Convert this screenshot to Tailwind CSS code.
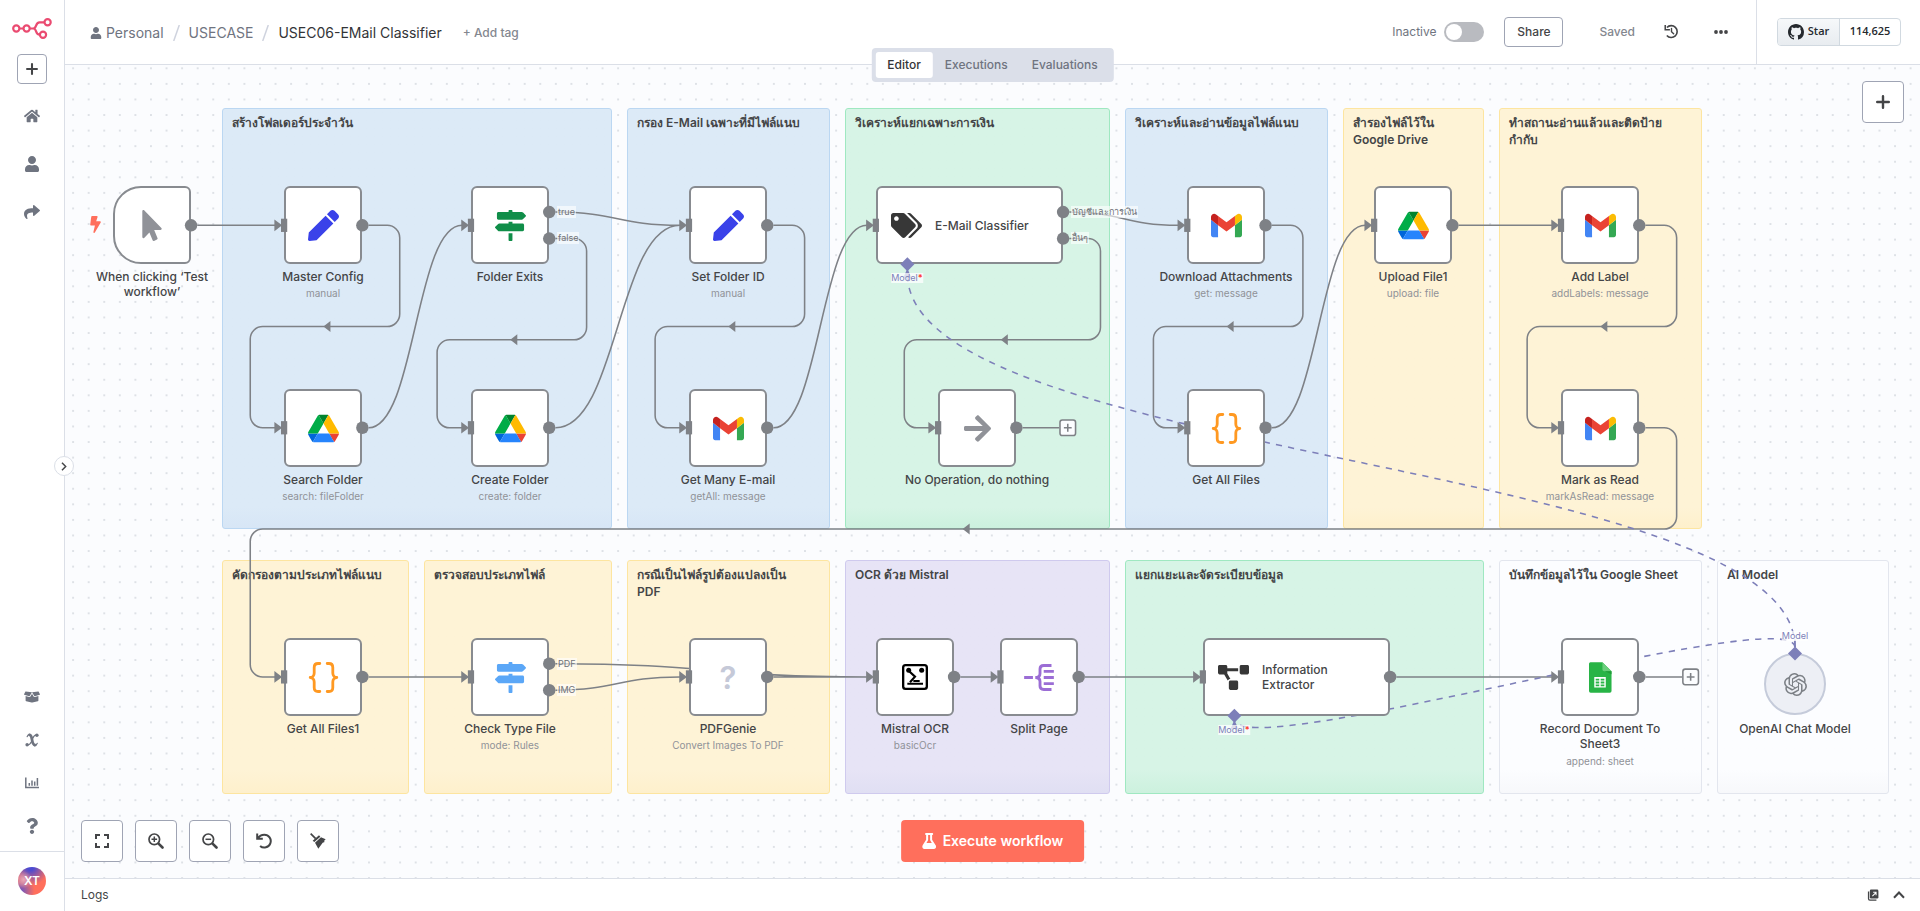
<!DOCTYPE html>
<html lang="en">
<head>
<meta charset="utf-8">
<title>USEC06-EMail Classifier</title>
<script src="https://cdn.jsdelivr.net/npm/@tailwindcss/browser@4"></script>
</head>
<body class="flex h-screen overflow-hidden bg-white font-['Inter','DejaVu_Sans',sans-serif] text-[#444547]">

<!-- Icon library -->
<svg class="hidden" aria-hidden="true">
  <symbol id="i-home" viewBox="0 0 576 512"><path fill="currentColor" d="M280.37 148.26L96 300.11V464a16 16 0 0 0 16 16l112.06-.29a16 16 0 0 0 15.92-16V368a16 16 0 0 1 16-16h64a16 16 0 0 1 16 16v95.64a16 16 0 0 0 16 16.05L464 480a16 16 0 0 0 16-16V300L295.67 148.26a12.19 12.19 0 0 0-15.3 0zM571.6 251.47L488 182.56V44.05a12 12 0 0 0-12-12h-56a12 12 0 0 0-12 12v72.61L318.47 43a48 48 0 0 0-61 0L4.34 251.47a12 12 0 0 0-1.6 16.9l25.5 31A12 12 0 0 0 45.15 301l235.22-193.74a12.19 12.19 0 0 1 15.3 0L530.9 301a12 12 0 0 0 16.9-1.6l25.5-31a12 12 0 0 0-1.7-16.93z"/></symbol>
  <symbol id="i-user" viewBox="0 0 448 512"><path fill="currentColor" d="M224 256c70.7 0 128-57.3 128-128S294.7 0 224 0 96 57.3 96 128s57.3 128 128 128zm89.6 32h-16.7c-22.2 10.2-46.9 16-72.9 16s-50.6-5.8-72.9-16h-16.7C60.2 288 0 348.2 0 422.4V464c0 26.5 21.5 48 48 48h352c26.5 0 48-21.5 48-48v-41.6c0-74.2-60.2-134.4-134.4-134.4z"/></symbol>
  <symbol id="i-share" viewBox="0 0 512 512"><path fill="currentColor" d="M503.691 189.836L327.687 37.851C312.281 24.546 288 35.347 288 56.015v80.053C127.371 137.907 0 170.1 0 322.326c0 61.441 39.581 122.309 83.333 154.132 13.653 9.931 33.111-2.533 28.077-18.631C66.066 312.814 132.917 274.316 288 272.085V360c0 20.7 24.3 31.453 39.687 18.164l176.004-152c11.071-9.562 11.086-26.753 0-36.328z"/></symbol>
  <symbol id="i-box" viewBox="0 0 640 512"><path fill="currentColor" d="M425.7 256c-16.9 0-32.8-9-41.4-23.4L320 126l-64.2 106.6c-8.7 14.5-24.6 23.5-41.5 23.5-4.5 0-9-.6-13.3-1.9L64 215v178c0 14.7 10 27.5 24.2 31l216.2 54.1c10.2 2.5 20.9 2.5 31 0L551.8 424c14.2-3.6 24.2-16.4 24.2-31V215l-137 39.1c-4.3 1.3-8.8 1.9-13.3 1.9zm212.6-112.2L586.8 41c-3.1-6.2-9.8-9.8-16.7-8.9L320 64l91.7 152.1c3.8 6.3 11.4 9.3 18.5 7.3l197.9-56.5c9.9-2.9 14.7-13.9 10.2-23.1zM53.2 41L1.7 143.8c-4.6 9.2.3 20.2 10.1 23l197.9 56.5c7.1 2 14.7-1 18.5-7.3L320 64 69.8 32.1c-6.9-.8-13.5 2.7-16.6 8.9z"/></symbol>
  <symbol id="i-variable" viewBox="0 0 14 14"><g fill="none" stroke="currentColor" stroke-linecap="round"><path stroke-width="2.8" d="M4.6 1.8c1.6.2 1.9 1.6 2.3 4.2.5 3.4.9 5.8 2.8 6"/><path stroke-width="1.3" d="M11.8 2C9.5 1.6 8.6 3.4 7.5 5.5M6.8 8.3C5.5 10.8 4.5 12.3 2.3 12"/></g><circle cx="11.9" cy="2.3" r="1.7" fill="currentColor"/><circle cx="2.1" cy="11.7" r="1.7" fill="currentColor"/><path fill="none" stroke="currentColor" stroke-linecap="round" stroke-width="1.3" d="M2.2 3.6C2.6 2.3 3.4 1.4 4.8 1.3M9.5 12.7c1.6 0 2.3-1 2.7-2.3"/></symbol>
  <symbol id="i-chart" viewBox="0 0 14 12"><path fill="none" stroke="currentColor" stroke-width="1.5" d="M.8.5v10H14M4.3 8.8V6M7 8.8V3.5M9.7 8.8V4.5M12.4 8.8V1"/></symbol>
  <symbol id="i-question" viewBox="0 0 384 512"><path fill="currentColor" d="M202.021 0C122.202 0 70.503 32.703 29.914 91.026c-7.363 10.58-5.093 25.086 5.178 32.874l43.138 32.709c10.373 7.865 25.132 6.026 33.253-4.148 25.049-31.381 43.63-49.449 82.757-49.449 30.764 0 68.816 19.799 68.816 49.631 0 22.552-18.617 34.134-48.993 51.164-35.423 19.86-82.299 44.576-82.299 106.405V320c0 13.255 10.745 24 24 24h72.471c13.255 0 24-10.745 24-24v-5.773c0-42.86 125.268-44.645 125.268-160.627C377.504 66.256 286.902 0 202.021 0zM192 373.459c-38.196 0-69.271 31.075-69.271 69.271 0 38.195 31.075 69.27 69.271 69.27s69.271-31.075 69.271-69.271-31.075-69.27-69.271-69.27z"/></symbol>
  <symbol id="i-plus" viewBox="0 0 14 14"><path fill="none" stroke="currentColor" stroke-width="2.4" stroke-linecap="round" d="M7 1.2v11.6M1.2 7h11.6"/></symbol>
  <symbol id="i-signs" viewBox="0 0 512 512"><path fill="currentColor" d="M507.31 84.69L464 41.37c-6-6-14.14-9.37-22.63-9.37H288V16c0-8.84-7.16-16-16-16h-32c-8.84 0-16 7.16-16 16v16H56c-13.25 0-24 10.75-24 24v80c0 13.25 10.75 24 24 24h385.37c8.49 0 16.62-3.37 22.63-9.37l43.31-43.31c6.25-6.26 6.25-16.38 0-22.63zM224 496c0 8.84 7.16 16 16 16h32c8.84 0 16-7.16 16-16V384h-64v112zm232-272H288v-32h-64v32H70.63c-8.49 0-16.62 3.37-22.63 9.37L4.69 276.69c-6.25 6.25-6.25 16.38 0 22.63L48 342.63c6 6 14.14 9.37 22.63 9.37H456c13.25 0 24-10.75 24-24v-80c0-13.25-10.75-24-24-24z"/></symbol>
  <symbol id="i-pen" viewBox="0 0 512 512"><path fill="currentColor" d="M290.74 93.24l128.02 128.02-277.99 277.99-114.14 12.6C11.35 513.54-1.56 500.62.14 485.34l12.7-114.22 277.9-277.88zm207.2-19.06l-60.11-60.11c-18.75-18.75-49.16-18.75-67.91 0l-56.55 56.55 128.02 128.02 56.55-56.55c18.75-18.76 18.75-49.16 0-67.91z"/></symbol>
  <symbol id="i-pointer" viewBox="0 0 320 512"><path fill="currentColor" d="M302.189 329.126H196.105l55.831 135.993c3.889 9.428-.555 19.999-9.444 23.999l-49.165 21.427c-9.165 4-19.443-.571-23.332-9.714l-53.053-129.136-86.664 89.138C18.729 472.71 0 463.554 0 447.977V18.299C0 1.899 19.921-6.096 30.277 5.443l284.412 292.542c11.472 11.179 3.007 31.141-12.5 31.141z"/></symbol>
  <symbol id="i-tags" viewBox="0 0 640 512"><path fill="currentColor" d="M497.941 225.941L286.059 14.059A48 48 0 0 0 252.118 0H48C21.49 0 0 21.49 0 48v204.118a48 48 0 0 0 14.059 33.941l211.882 211.882c18.744 18.745 49.136 18.746 67.882 0l204.118-204.118c18.745-18.745 18.745-49.137 0-67.882zM112 160c-26.51 0-48-21.49-48-48s21.49-48 48-48 48 21.49 48 48-21.49 48-48 48zm513.941 133.823L421.823 497.941c-18.745 18.745-49.137 18.745-67.882 0l-.36-.36L527.64 323.522c16.999-16.999 26.36-39.6 26.36-63.64s-9.362-46.641-26.36-63.64L331.397 0h48.721a48 48 0 0 1 33.941 14.059l211.882 211.882c18.745 18.745 18.745 49.137 0 67.882z"/></symbol>
  <symbol id="i-diagram" viewBox="0 0 640 512"><path fill="currentColor" d="M384 320H256c-17.67 0-32 14.33-32 32v128c0 17.67 14.33 32 32 32h128c17.67 0 32-14.33 32-32V352c0-17.67-14.33-32-32-32zM192 32c0-17.67-14.33-32-32-32H32C14.33 0 0 14.33 0 32v128c0 17.67 14.33 32 32 32h95.72l73.16 128.04C211.98 300.98 232.4 288 256 288h.28L192 175.51V128h224V64H192V32zM608 0H480c-17.67 0-32 14.33-32 32v128c0 17.67 14.33 32 32 32h128c17.67 0 32-14.33 32-32V32c0-17.67-14.33-32-32-32z"/></symbol>
  <symbol id="i-flask" viewBox="0 0 448 512"><path fill="currentColor" d="M437.2 403.5L320 215V64h8c13.3 0 24-10.7 24-24V24c0-13.3-10.7-24-24-24H120c-13.3 0-24 10.7-24 24v16c0 13.3 10.7 24 24 24h8v151L10.8 403.5C-18.5 450.6 15.3 512 70.9 512h306.2c55.7 0 89.4-61.5 60.1-108.5zM137.9 320l48.2-77.6c3.7-5.2 5.8-11.6 5.8-18.4V64h64v160c0 6.9 2.2 13.2 5.8 18.4l48.2 77.6h-172z"/></symbol>
  <symbol id="i-bolt" viewBox="0 0 320 512"><path fill="currentColor" d="M296 160H180.6l42.6-129.8C227.2 15 215.7 0 200 0H56C44 0 33.8 8.9 32.2 20.8l-32 240C-1.7 275.2 9.5 288 24 288h118.7L96.6 482.5c-3.6 15.2 8 29.5 23.3 29.5 8.4 0 16.4-4.4 20.8-12l176-304c9.3-15.9-2.2-36-20.7-36z"/></symbol>
  <symbol id="i-arrow" viewBox="0 0 448 512"><path fill="currentColor" d="M190.5 66.9l22.2-22.2c9.4-9.4 24.6-9.4 33.9 0L441 239c9.4 9.4 9.4 24.6 0 33.9L246.6 467.3c-9.4 9.4-24.6 9.4-33.9 0l-22.2-22.2c-9.5-9.5-9.3-25 .4-34.3L311.4 296H24c-13.3 0-24-10.7-24-24v-32c0-13.3 10.7-24 24-24h287.4L190.9 101.2c-9.8-9.3-10-24.8-.4-34.3z"/></symbol>
  <symbol id="i-history" viewBox="0 0 16 16"><path fill="none" stroke="currentColor" stroke-width="1.7" d="M3.1 3.8A6.3 6.3 0 1 1 3 12.2"/><path fill="none" stroke="currentColor" stroke-width="1.6" d="M1.3 1v5h5"/><path fill="none" stroke="currentColor" stroke-width="1.5" stroke-linecap="round" d="M8 4.7V8.3l2.3 2.2"/></symbol>
  <symbol id="i-expand" viewBox="0 0 14 14"><path fill="none" stroke="currentColor" stroke-width="2" d="M1 5V1h4M9 1h4v4M13 9v4H9M5 13H1V9"/></symbol>
  <symbol id="i-zoomin" viewBox="0 0 16 16"><g fill="none" stroke="currentColor"><circle cx="6.3" cy="6.3" r="5.3" stroke-width="1.7"/><path stroke-width="1.5" d="M3.5 6.3h5.6M6.3 3.5v5.6"/><path stroke-width="2.6" stroke-linecap="round" d="M10.8 10.8l3.7 3.7"/></g></symbol>
  <symbol id="i-zoomout" viewBox="0 0 16 16"><g fill="none" stroke="currentColor"><circle cx="6.3" cy="6.3" r="5.3" stroke-width="1.7"/><path stroke-width="1.5" d="M3.5 6.3h5.6"/><path stroke-width="2.6" stroke-linecap="round" d="M10.8 10.8l3.7 3.7"/></g></symbol>
  <symbol id="i-undo" viewBox="0 0 16 16"><path fill="none" stroke="currentColor" stroke-width="2" d="M1.2.5v5.3h5.6M2 5.3C3.4 2.9 5.6 1.7 8.3 1.7a6.4 6.4 0 1 1-4.2 11.2"/></symbol>
  <symbol id="i-broom" viewBox="0 0 48 48"><path fill="none" stroke="currentColor" stroke-width="5" d="M2 2l15 15"/><path fill="currentColor" d="M8 23L27 7l4 4L13 27zM15 29L33 13l14 6-5 5 2 3-6 2-13 18z"/></symbol>
  <symbol id="i-openai" viewBox="0 0 24 24"><path fill="currentColor" d="M22.2819 9.8211a5.9847 5.9847 0 0 0-.5157-4.9108 6.0462 6.0462 0 0 0-6.5098-2.9A6.0651 6.0651 0 0 0 4.9807 4.1818a5.9847 5.9847 0 0 0-3.9977 2.9 6.0462 6.0462 0 0 0 .7427 7.0966 5.98 5.98 0 0 0 .511 4.9107 6.051 6.051 0 0 0 6.5146 2.9001A5.9847 5.9847 0 0 0 13.2599 24a6.0557 6.0557 0 0 0 5.7718-4.2058 5.9894 5.9894 0 0 0 3.9977-2.9001 6.0557 6.0557 0 0 0-.7475-7.0729zm-9.022 12.6081a4.4755 4.4755 0 0 1-2.8764-1.0408l.1419-.0804 4.7783-2.7582a.7948.7948 0 0 0 .3927-.6813v-6.7369l2.02 1.1686a.071.071 0 0 1 .038.052v5.5826a4.504 4.504 0 0 1-4.4945 4.4944zm-9.6607-4.1254a4.4708 4.4708 0 0 1-.5346-3.0137l.142.0852 4.783 2.7582a.7712.7712 0 0 0 .7806 0l5.8428-3.3685v2.3324a.0804.0804 0 0 1-.0332.0615L9.74 19.9502a4.4992 4.4992 0 0 1-6.1408-1.6464zM2.3408 7.8956a4.485 4.485 0 0 1 2.3655-1.9728V11.6a.7664.7664 0 0 0 .3879.6765l5.8144 3.3543-2.0201 1.1685a.0757.0757 0 0 1-.071 0l-4.8303-2.7865A4.504 4.504 0 0 1 2.3408 7.872zm16.5963 3.8558L13.1038 8.364 15.1192 7.2a.0757.0757 0 0 1 .071 0l4.8303 2.7913a4.4944 4.4944 0 0 1-.6765 8.1042v-5.6772a.79.79 0 0 0-.407-.667zm2.0107-3.0231l-.142-.0852-4.7735-2.7818a.7759.7759 0 0 0-.7854 0L9.409 9.2297V6.8974a.0662.0662 0 0 1 .0284-.0615l4.8303-2.7866a4.4992 4.4992 0 0 1 6.6802 4.66zM8.3065 12.863l-2.02-1.1638a.0804.0804 0 0 1-.038-.0567V6.0742a4.4992 4.4992 0 0 1 7.3757-3.4537l-.142.0805L8.704 5.459a.7948.7948 0 0 0-.3927.6813zm1.0976-2.3654l2.602-1.4998 2.6069 1.4998v2.9994l-2.5974 1.4997-2.6067-1.4997Z"/></symbol>
  <symbol id="i-github" viewBox="0 0 16 16"><path fill="currentColor" d="M8 0C3.58 0 0 3.58 0 8c0 3.54 2.29 6.53 5.47 7.59.4.07.55-.17.55-.38 0-.19-.01-.82-.01-1.49-2.01.37-2.53-.49-2.69-.94-.09-.23-.48-.94-.82-1.13-.28-.15-.68-.52-.01-.53.63-.01 1.08.58 1.23.82.72 1.21 1.87.87 2.33.66.07-.52.28-.87.51-1.07-1.78-.2-3.64-.89-3.64-3.95 0-.87.31-1.59.82-2.15-.08-.2-.36-1.02.08-2.12 0 0 .67-.21 2.2.82.64-.18 1.32-.27 2-.27s1.36.09 2 .27c1.53-1.04 2.2-.82 2.2-.82.44 1.1.16 1.92.08 2.12.51.56.82 1.27.82 2.15 0 3.07-1.87 3.75-3.65 3.95.29.25.54.73.54 1.48 0 1.07-.01 1.93-.01 2.2 0 .21.15.46.55.38A8.01 8.01 0 0 0 16 8c0-4.42-3.58-8-8-8z"/></symbol>
  <symbol id="i-gmail" viewBox="52 42 88 66"><path fill="#4285f4" d="M58 108h14V74L52 59v43c0 3.32 2.69 6 6 6"/><path fill="#34a853" d="M120 108h14c3.32 0 6-2.69 6-6V59l-20 15"/><path fill="#fbbc04" d="M120 48v26l20-15v-8c0-7.42-8.47-11.65-14.4-7.2"/><path fill="#ea4335" d="M72 74V48l24 18 24-18v26L96 92"/><path fill="#c5221f" d="M52 51v8l20 15V48l-5.6-4.2c-5.94-4.45-14.4-.22-14.4 7.2"/></symbol>
  <symbol id="i-drive" viewBox="0 0 87.3 78"><path fill="#0066da" d="m6.6 66.85 3.85 6.65c.8 1.4 1.95 2.5 3.3 3.3l13.75-23.8h-27.5c0 1.55.4 3.1 1.2 4.5z"/><path fill="#00ac47" d="m43.65 25-13.75-23.8c-1.35.8-2.5 1.9-3.3 3.3l-25.4 44a9.06 9.06 0 0 0 -1.2 4.5h27.5z"/><path fill="#ea4335" d="m73.55 76.8c1.35-.8 2.5-1.9 3.3-3.3l1.6-2.75 7.65-13.25c.8-1.4 1.2-2.95 1.2-4.5h-27.502l5.852 11.5z"/><path fill="#00832d" d="m43.65 25 13.75-23.8c-1.35-.8-2.9-1.2-4.5-1.2h-18.5c-1.6 0-3.15.45-4.5 1.2z"/><path fill="#2684fc" d="m59.8 53h-32.3l-13.75 23.8c1.35.8 2.9 1.2 4.5 1.2h50.8c1.6 0 3.15-.45 4.5-1.2z"/><path fill="#ffba00" d="m73.4 26.5-12.7-22c-.8-1.4-1.95-2.5-3.3-3.3l-13.75 23.8 16.15 28h27.45c0-1.55-.4-3.1-1.2-4.5z"/></symbol>
  <symbol id="i-sheets" viewBox="0 0 24 32"><path fill="#28b446" d="M1.5 0H14l9.5 9.5V30a1.8 1.8 0 0 1-1.8 1.8H1.8A1.8 1.8 0 0 1 0 30V1.8A1.8 1.8 0 0 1 1.5 0z"/><path fill="#6ace7c" d="M14 0l9.5 9.5h-7.7A1.8 1.8 0 0 1 14 7.7z"/><path fill="#219b38" d="M16.5 9.5h7v3z"/><path fill="#fff" fill-rule="evenodd" d="M5.5 15.5h12v11h-12zM7 17.2v2h3.7v-2zM12.2 17.2v2H16v-2zM7 20.3v1.9h3.7v-1.9zM12.2 20.3v1.9H16v-1.9zM7 23.3v1.8h3.7v-1.8zM12.2 23.3v1.8H16v-1.8z"/></symbol>
  <symbol id="i-braces" viewBox="0 0 30 31"><g fill="none" stroke="#ff9922" stroke-width="2.8" stroke-linecap="round" stroke-linejoin="round"><path d="M11.3 1.5H9.5C6.8 1.5 5.7 3 5.7 5.5V11c0 2.5-1.5 4.5-4 4.5 2.5 0 4 2 4 4.500v5.500c0 2.500 1.100 4 3.800 4h1.800M18.700 1.500h1.800c2.700 0 3.800 1.500 3.800 4V11c0 2.500 1.500 4.500 4 4.500-2.500 0-4 2-4 4.500v5.500c0 2.500-1.100 4-3.800 4h-1.800"/></g></symbol>
  <symbol id="i-mistral" viewBox="0 0 78 78"><rect x="3.5" y="3.5" width="71" height="71" rx="7" fill="#fff" stroke="#000" stroke-width="7"/><circle cx="20" cy="19" r="7.5"/><circle cx="59" cy="19" r="7.5"/><path fill="none" stroke="#000" stroke-width="6.5" d="M20 20l19 18-15 17"/><path fill="none" stroke="#000" stroke-width="6" d="M16 59h47M34 51h19"/></symbol>
  <symbol id="i-split" viewBox="0 0 88 80"><g fill="none" stroke="#9b6dd5" stroke-width="8.5"><path d="M81 4.500H58c-7 0-11 3-11 10V28c0 8-4 12-14 12 10 0 14 4 14 12v13.500c0 7 4 10 11 10h23M58 22h30M58 40h30M58 58h30M0 40h26"/></g></symbol>
  <symbol id="i-popout" viewBox="0 0 14 14"><path fill="none" stroke="currentColor" stroke-width="1.5" d="M1.8 3v8.5c0 .8.5 1.5 1.5 1.5H11"/><rect x="3.3" y=".7" width="10" height="10.5" rx="1.5" fill="currentColor"/><path fill="none" stroke="#fff" stroke-width="1.2" d="M6.3 8.2l3.8-3.8M7.2 3.9h3.4v3.4"/></symbol>
</svg>

<!-- Sidebar -->
<aside class="relative z-20 flex w-[65px] shrink-0 flex-col border-r border-[#dbdfe7] bg-white text-[#6f7480]">
  <div class="flex flex-col items-center pt-[18px]">
    <svg class="h-[21px] w-10" viewBox="0 0 40 21" fill="none" stroke="#ea4b71" stroke-width="2.2"><circle cx="4.300" cy="10.500" r="3.100"/><circle cx="14.600" cy="10.500" r="3.100"/><circle cx="35.600" cy="4.300" r="3.100"/><circle cx="31" cy="16.700" r="3.100"/><path d="M7.500 10.500h4M17.800 10.500h3.500c3.800 0 1.700-6.200 6.200-6.200h5M21.300 10.500c3.800 0 1.700 6.200 6.200 6.200"/></svg>
    <button class="mt-[15px] flex size-[30px] items-center justify-center rounded border border-[#9fa4b4] text-[#444547]" aria-label="Add"><svg class="size-3"><use href="#i-plus"/></svg></button>
  </div>
  <nav class="flex flex-1 flex-col pt-2">
    <a href="#" class="flex h-12 items-center justify-center" aria-label="Home"><svg class="size-4"><use href="#i-home"/></svg></a>
    <a href="#" class="flex h-12 items-center justify-center" aria-label="Personal"><svg class="size-4"><use href="#i-user"/></svg></a>
    <a href="#" class="flex h-12 items-center justify-center" aria-label="Shared"><svg class="size-4"><use href="#i-share"/></svg></a>
    <div class="flex-1"></div>
    <a href="#" class="flex h-[43px] items-center justify-center" aria-label="Templates"><svg class="size-4"><use href="#i-box"/></svg></a>
    <a href="#" class="flex h-[43px] items-center justify-center" aria-label="Variables"><svg class="size-[14px]"><use href="#i-variable"/></svg></a>
    <a href="#" class="flex h-[43px] items-center justify-center" aria-label="Insights"><svg class="h-3 w-[14px]"><use href="#i-chart"/></svg></a>
    <a href="#" class="mb-1 flex h-[43px] items-center justify-center" aria-label="Help"><svg class="size-4"><use href="#i-question"/></svg></a>
  </nav>
  <div class="flex h-[60px] items-center justify-center border-t border-[#dbdfe7] pb-px">
    <button class="size-7 rounded-full bg-[radial-gradient(circle_at_20%_45%,#e9a9b8_0%,transparent_32%),radial-gradient(circle_at_45%_0%,#4d4bd0_10%,transparent_58%),radial-gradient(circle_at_10%_85%,#6a55c4_0%,transparent_40%),linear-gradient(#ff6f5c,#ff6f5c)] text-xs font-semibold text-white">XT</button>
  </div>
  <button class="absolute -right-[10px] top-[456px] flex size-5 items-center justify-center rounded-full border border-[#dbdfe7] bg-white" aria-label="Expand sidebar"><svg class="h-[9px] w-[6px]" viewBox="0 0 5 8" fill="none" stroke="#444547" stroke-width="1.300"><path d="M.7.7L4 4 .7 7.300"/></svg></button>
</aside>

<div class="relative flex min-w-0 flex-1 flex-col">
  <!-- Header -->
  <header class="flex h-[65px] shrink-0 border-b border-[#dbdfe7] bg-white">
    <div class="flex flex-1 items-center pt-[2px] pl-[25px] text-sm">
      <a href="#" class="flex items-center gap-1 text-[#6f7480]"><svg class="size-3"><use href="#i-user"/></svg>Personal</a>
      <svg class="mx-[9px] h-4 w-[7px]" viewBox="0 0 7 16" stroke="#cfd3de" stroke-width="1.500"><path d="M6.300 0L.7 16"/></svg>
      <a href="#" class="text-[#6f7480]">USECASE</a>
      <svg class="mx-[9px] h-4 w-[7px]" viewBox="0 0 7 16" stroke="#cfd3de" stroke-width="1.500"><path d="M6.300 0L.7 16"/></svg>
      <h1 class="text-[#333437]">USEC06-EMail Classifier</h1>
      <button class="ml-[21px] text-xs font-medium text-[#84878f]">+ Add tag</button>
    </div>
    <div class="flex items-center pb-px text-xs">
      <label class="flex items-center gap-2 text-[#6f7480]" for="active">Inactive
        <input id="active" type="checkbox" role="switch" class="h-5 w-10 appearance-none rounded-full bg-[#b9bbc0] before:block before:size-4 before:translate-x-[2px] before:translate-y-[2px] before:rounded-full before:bg-white before:content-['']">
      </label>
      <button class="ml-5 h-[30px] w-[59px] rounded border border-[#9fa4b4] font-medium text-[#444547]">Share</button>
      <span class="ml-9 font-medium text-[#84878f]">Saved</span>
      <button class="ml-[29px] text-[#444547]" aria-label="History"><svg class="size-[15px]"><use href="#i-history"/></svg></button>
      <button class="mr-[28px] ml-[35px] text-[#444547]" aria-label="More"><svg class="h-1 w-[14px]" viewBox="0 0 14 4" fill="currentColor"><circle cx="2" cy="2" r="1.900"/><circle cx="7" cy="2" r="1.900"/><circle cx="12" cy="2" r="1.900"/></svg></button>
    </div>
    <div class="flex w-[164px] items-center border-l border-[#dbdfe7] pb-px pl-5">
      <a href="#" class="flex h-7 items-stretch overflow-hidden rounded border border-[#d1d9e0] font-['Open_Sans',sans-serif] text-xs font-semibold text-[#25292e]">
        <span class="flex w-[62px] items-center justify-center gap-1 border-r border-[#d1d9e0] bg-linear-to-b from-[#f6f8fa] to-[#e8ecf0]"><svg class="size-4"><use href="#i-github"/></svg><span class="text-[11px]">Star</span></span>
        <span class="flex w-[60px] items-center justify-center text-[11px]">114,625</span>
      </a>
    </div>
  </header>

  <!-- View tabs straddling the header border -->
  <div class="absolute top-12 left-1/2 z-10 flex -translate-x-1/2 rounded bg-[#dbdfe9] p-1 text-xs font-medium text-[#6f7480]" role="tablist">
    <button role="tab" aria-selected="true" class="h-[26px] rounded-[3px] bg-white px-3 text-[#333437]">Editor</button>
    <button role="tab" class="h-[26px] px-3">Executions</button>
    <button role="tab" class="h-[26px] px-3">Evaluations</button>
  </div>

  <!-- Workflow canvas -->
  <main class="relative flex-1 overflow-hidden bg-[#fbfcfe]">
    <svg class="absolute inset-0 size-full" aria-hidden="true">
      <defs><pattern id="dots" x=".32" y="11.090" width="15.572" height="15.572" patternUnits="userSpaceOnUse"><circle cx="7.786" cy="7.786" r=".8" fill="#b9bec9"/></pattern></defs>
      <rect width="100%" height="100%" fill="url(#dots)"/>
    </svg>

    <!-- Sticky notes -->
    <section class="absolute left-[157px] top-[43px] h-[421px] w-[390px] rounded-[3px] border border-[#bbd7f2] bg-linear-to-b from-[#dceaf7] from-95% to-[#d7e6f6] px-[9px] pt-[5px]"><h2 class="text-xs/[17px] font-semibold">สร้างโฟลเดอร์ประจำวัน</h2></section>
    <section class="absolute left-[562px] top-[43px] h-[421px] w-[203px] rounded-[3px] border border-[#bbd7f2] bg-linear-to-b from-[#dceaf7] from-95% to-[#d7e6f6] px-[9px] pt-[5px]"><h2 class="text-xs/[17px] font-semibold whitespace-nowrap">กรอง E-Mail เฉพาะที่มีไฟล์แนบ</h2></section>
    <section class="absolute left-[780px] top-[43px] h-[421px] w-[265px] rounded-[3px] border border-[#9fe8c1] bg-linear-to-b from-[#d7f4e6] from-95% to-[#ccf1de] px-[9px] pt-[5px]"><h2 class="text-xs/[17px] font-semibold">วิเคราะห์แยกเฉพาะการเงิน</h2></section>
    <section class="absolute left-[1060px] top-[43px] h-[421px] w-[203px] rounded-[3px] border border-[#bbd7f2] bg-linear-to-b from-[#dceaf7] from-95% to-[#d7e6f6] px-[9px] pt-[5px]"><h2 class="text-xs/[17px] font-semibold whitespace-nowrap">วิเคราะห์และอ่านข้อมูลไฟล์แนบ</h2></section>
    <section class="absolute left-[1278px] top-[43px] h-[421px] w-[141px] rounded-[3px] border border-[#fde5a0] bg-linear-to-b from-[#fef3d6] from-95% to-[#fef0cc] px-[9px] pt-[5px]"><h2 class="text-xs/[17px] font-semibold">สำรองไฟล์ไว้ใน<br>Google Drive</h2></section>
    <section class="absolute left-[1434px] top-[43px] h-[421px] w-[203px] rounded-[3px] border border-[#fde5a0] bg-linear-to-b from-[#fef3d6] from-95% to-[#fef0cc] px-[9px] pt-[5px]"><h2 class="text-xs/[17px] font-semibold">ทำสถานะอ่านแล้วและติดป้าย<br>กำกับ</h2></section>

    <section class="absolute left-[157px] top-[495px] h-[234px] w-[187px] rounded-[3px] border border-[#fde5a0] bg-linear-to-b from-[#fef3d6] from-90% to-[#fef0cc] px-[9px] pt-[5px]"><h2 class="text-xs/[17px] font-semibold whitespace-nowrap">คัดกรองตามประเภทไฟล์แนบ</h2></section>
    <section class="absolute left-[359px] top-[495px] h-[234px] w-[188px] rounded-[3px] border border-[#fde5a0] bg-linear-to-b from-[#fef3d6] from-90% to-[#fef0cc] px-[9px] pt-[5px]"><h2 class="text-xs/[17px] font-semibold whitespace-nowrap">ตรวจสอบประเภทไฟล์</h2></section>
    <section class="absolute left-[562px] top-[495px] h-[234px] w-[203px] rounded-[3px] border border-[#fde5a0] bg-linear-to-b from-[#fef3d6] from-90% to-[#fef0cc] px-[9px] pt-[5px]"><h2 class="text-xs/[17px] font-semibold">กรณีเป็นไฟล์รูปต้องแปลงเป็น<br>PDF</h2></section>
    <section class="absolute left-[780px] top-[495px] h-[234px] w-[265px] rounded-[3px] border border-[#cfcaee] bg-linear-to-b from-[#e7e4f6] from-90% to-[#e0dff3] px-[9px] pt-[5px]"><h2 class="text-xs/[17px] font-semibold">OCR ด้วย Mistral</h2></section>
    <section class="absolute left-[1060px] top-[495px] h-[234px] w-[359px] rounded-[3px] border border-[#9fe8c1] bg-linear-to-b from-[#d7f4e6] from-90% to-[#ccf1de] px-[9px] pt-[5px]"><h2 class="text-xs/[17px] font-semibold">แยกแยะและจัดระเบียบข้อมูล</h2></section>
    <section class="absolute left-[1434px] top-[495px] h-[234px] w-[203px] rounded-[3px] border border-[#e3e6ee] bg-linear-to-b from-[#fcfdff] from-90% to-[#f7f8fb] px-[9px] pt-[5px]"><h2 class="text-xs/[17px] font-semibold whitespace-nowrap">บันทึกข้อมูลไว้ใน Google Sheet</h2></section>
    <section class="absolute left-[1652px] top-[495px] h-[234px] w-[172px] rounded-[3px] border border-[#e3e6ee] bg-linear-to-b from-[#fcfdff] from-90% to-[#f7f8fb] px-[9px] pt-[5px]"><h2 class="text-xs/[17px] font-semibold">AI Model</h2></section>

    <!-- Connections (drawn in workflow units, scaled to the current zoom) -->
    <svg class="absolute inset-0 size-full" aria-hidden="true">
      <g transform="translate(219.500 121.400) scale(.7786)" fill="none" stroke="#7e8186" stroke-width="2">
        <path d="M-112 50H-8M1508 50H1628"/>
        <path d="M108 310C168 310 168 50 228 50M348 33C428 33 428 50 508 50M348 310C428 310 428 50 508 50M628 310C688 310 688 50 748 50M1008 33C1078 33 1078 50 1148 50M1268 310C1328 310 1328 50 1388 50"/>
        <path d="M108 50H132A16 16 0 0 1 148 66V164A16 16 0 0 1 132 180H-28A16 16 0 0 0-44 196V294A16 16 0 0 0-28 310H-8"/>
        <path d="M348 67H372A16 16 0 0 1 388 83V181A16 16 0 0 1 372 197H212A16 16 0 0 0 196 213V294A16 16 0 0 0 212 310H232"/>
        <path d="M628 50H652A16 16 0 0 1 668 66V164A16 16 0 0 1 652 180H492A16 16 0 0 0 476 196V294A16 16 0 0 0 492 310H512"/>
        <path d="M1008 67H1032A16 16 0 0 1 1048 83V181A16 16 0 0 1 1032 197H812A16 16 0 0 0 796 213V294A16 16 0 0 0 812 310H832"/>
        <path d="M1268 50H1292A16 16 0 0 1 1308 66V164A16 16 0 0 1 1292 180H1132A16 16 0 0 0 1116 196V294A16 16 0 0 0 1132 310H1152"/>
        <path d="M1748 50H1772A16 16 0 0 1 1788 66V164A16 16 0 0 1 1772 180H1612A16 16 0 0 0 1596 196V294A16 16 0 0 0 1612 310H1632"/>
        <path d="M1748 310H1772A16 16 0 0 1 1788 326V424A16 16 0 0 1 1772 440H-28A16 16 0 0 0-44 456V614A16 16 0 0 0-28 630H-8"/>
        <path d="M948 310H995M108 630H228M348 613C548 613 548 630 748 630M348 647C428 647 428 630 508 630M628 630H748M868 630H908M1028 630H1168M1428 630H1628M1748 630H1795"/>
        <g stroke="#7d7fb9" stroke-dasharray="8 8"><path d="M1940 592C1940 352 800 352 800 112"/><path d="M1940 592C1940 531 1220 745 1220 684"/></g>
        <g fill="#7e8186" stroke="none">
          <path d="M50 180l9-7v14zM290 197l9-7v14zM570 180l9-7v14zM920 197l9-7v14zM1210 180l9-7v14zM1690 180l9-7v14zM871 440l9-7v14z"/>
        </g>
      </g>
    </svg>

    <!-- Nodes: first row -->
    <svg class="absolute left-[25px] top-[151px] h-[17px] w-[11px] text-[#ff6f5c]"><use href="#i-bolt"/></svg>
    <article class="absolute left-[48px] top-[121px] flex w-[78px] flex-col items-center text-center">
      <div class="flex h-[78px] w-full items-center justify-center rounded-l-[28px] rounded-r-[6px] border-2 border-[#888b90] bg-white text-[#909298]"><svg class="h-[31px] w-5"><use href="#i-pointer"/></svg></div>
      <h3 class="mt-[5px] w-[156px] text-xs/[15px] font-medium">When clicking ‘Test<br>workflow’</h3>
    </article>
    <article class="absolute left-[219px] top-[121px] flex w-[78px] flex-col items-center text-center">
      <div class="flex h-[78px] w-full items-center justify-center rounded-[6px] border-2 border-[#888b90] bg-white text-[#3a42e9]"><svg class="size-[31px]"><use href="#i-pen"/></svg></div>
      <h3 class="mt-[5px] w-[156px] text-xs/[15px] font-medium">Master Config</h3>
      <p class="mt-[3px] text-[10px]/[12px] text-[#909298]">manual</p>
    </article>
    <article class="absolute left-[406px] top-[121px] flex w-[78px] flex-col items-center text-center">
      <div class="flex h-[78px] w-full items-center justify-center rounded-[6px] border-2 border-[#888b90] bg-white text-[#108e49]"><svg class="size-[31px]"><use href="#i-signs"/></svg></div>
      <h3 class="mt-[5px] w-[156px] text-xs/[15px] font-medium">Folder Exits</h3>
    </article>
    <article class="absolute left-[624px] top-[121px] flex w-[78px] flex-col items-center text-center">
      <div class="flex h-[78px] w-full items-center justify-center rounded-[6px] border-2 border-[#888b90] bg-white text-[#3a42e9]"><svg class="size-[31px]"><use href="#i-pen"/></svg></div>
      <h3 class="mt-[5px] w-[156px] text-xs/[15px] font-medium">Set Folder ID</h3>
      <p class="mt-[3px] text-[10px]/[12px] text-[#909298]">manual</p>
    </article>
    <article class="absolute left-[811px] top-[121px] flex h-[78px] w-[187px] items-center gap-[13px] rounded-[6px] border-2 border-[#888b90] bg-white pl-[13px]">
      <svg class="h-[25px] w-[31px] text-[#373737]"><use href="#i-tags"/></svg>
      <h3 class="text-xs/[15px] font-medium">E-Mail Classifier</h3>
    </article>
    <article class="absolute left-[1122px] top-[121px] flex w-[78px] flex-col items-center text-center">
      <div class="flex h-[78px] w-full items-center justify-center rounded-[6px] border-2 border-[#888b90] bg-white"><svg class="size-[31px]"><use href="#i-gmail"/></svg></div>
      <h3 class="mt-[5px] w-[156px] text-xs/[15px] font-medium">Download Attachments</h3>
      <p class="mt-[3px] text-[10px]/[12px] whitespace-nowrap text-[#909298]">get: message</p>
    </article>
    <article class="absolute left-[1309px] top-[121px] flex w-[78px] flex-col items-center text-center">
      <div class="flex h-[78px] w-full items-center justify-center rounded-[6px] border-2 border-[#888b90] bg-white"><svg class="size-[31px]"><use href="#i-drive"/></svg></div>
      <h3 class="mt-[5px] w-[156px] text-xs/[15px] font-medium">Upload File1</h3>
      <p class="mt-[3px] text-[10px]/[12px] whitespace-nowrap text-[#909298]">upload: file</p>
    </article>
    <article class="absolute left-[1496px] top-[121px] flex w-[78px] flex-col items-center text-center">
      <div class="flex h-[78px] w-full items-center justify-center rounded-[6px] border-2 border-[#888b90] bg-white"><svg class="size-[31px]"><use href="#i-gmail"/></svg></div>
      <h3 class="mt-[5px] w-[156px] text-xs/[15px] font-medium">Add Label</h3>
      <p class="mt-[3px] text-[10px]/[12px] whitespace-nowrap text-[#909298]">addLabels: message</p>
    </article>

    <!-- Nodes: second row -->
    <article class="absolute left-[219px] top-[324px] flex w-[78px] flex-col items-center text-center">
      <div class="flex h-[78px] w-full items-center justify-center rounded-[6px] border-2 border-[#888b90] bg-white"><svg class="size-[31px]"><use href="#i-drive"/></svg></div>
      <h3 class="mt-[5px] w-[156px] text-xs/[15px] font-medium">Search Folder</h3>
      <p class="mt-[3px] text-[10px]/[12px] whitespace-nowrap text-[#909298]">search: fileFolder</p>
    </article>
    <article class="absolute left-[406px] top-[324px] flex w-[78px] flex-col items-center text-center">
      <div class="flex h-[78px] w-full items-center justify-center rounded-[6px] border-2 border-[#888b90] bg-white"><svg class="size-[31px]"><use href="#i-drive"/></svg></div>
      <h3 class="mt-[5px] w-[156px] text-xs/[15px] font-medium">Create Folder</h3>
      <p class="mt-[3px] text-[10px]/[12px] whitespace-nowrap text-[#909298]">create: folder</p>
    </article>
    <article class="absolute left-[624px] top-[324px] flex w-[78px] flex-col items-center text-center">
      <div class="flex h-[78px] w-full items-center justify-center rounded-[6px] border-2 border-[#888b90] bg-white"><svg class="size-[31px]"><use href="#i-gmail"/></svg></div>
      <h3 class="mt-[5px] w-[156px] text-xs/[15px] font-medium">Get Many E-mail</h3>
      <p class="mt-[3px] text-[10px]/[12px] whitespace-nowrap text-[#909298]">getAll: message</p>
    </article>
    <article class="absolute left-[873px] top-[324px] flex w-[78px] flex-col items-center text-center">
      <div class="flex h-[78px] w-full items-center justify-center rounded-[6px] border-2 border-[#888b90] bg-white text-[#909298]"><svg class="h-[31px] w-[27px]"><use href="#i-arrow"/></svg></div>
      <h3 class="mt-[5px] w-[156px] text-xs/[15px] font-medium">No Operation, do nothing</h3>
    </article>
    <article class="absolute left-[1122px] top-[324px] flex w-[78px] flex-col items-center text-center">
      <div class="flex h-[78px] w-full items-center justify-center rounded-[6px] border-2 border-[#888b90] bg-white"><svg class="size-[31px]"><use href="#i-braces"/></svg></div>
      <h3 class="mt-[5px] w-[156px] text-xs/[15px] font-medium">Get All Files</h3>
    </article>
    <article class="absolute left-[1496px] top-[324px] flex w-[78px] flex-col items-center text-center">
      <div class="flex h-[78px] w-full items-center justify-center rounded-[6px] border-2 border-[#888b90] bg-white"><svg class="size-[31px]"><use href="#i-gmail"/></svg></div>
      <h3 class="mt-[5px] w-[156px] text-xs/[15px] font-medium">Mark as Read</h3>
      <p class="mt-[3px] text-[10px]/[12px] whitespace-nowrap text-[#909298]">markAsRead: message</p>
    </article>

    <!-- Nodes: third row -->
    <article class="absolute left-[219px] top-[573px] flex w-[78px] flex-col items-center text-center">
      <div class="flex h-[78px] w-full items-center justify-center rounded-[6px] border-2 border-[#888b90] bg-white"><svg class="size-[31px]"><use href="#i-braces"/></svg></div>
      <h3 class="mt-[5px] w-[156px] text-xs/[15px] font-medium">Get All Files1</h3>
    </article>
    <article class="absolute left-[406px] top-[573px] flex w-[78px] flex-col items-center text-center">
      <div class="flex h-[78px] w-full items-center justify-center rounded-[6px] border-2 border-[#888b90] bg-white text-[#5ba7f7]"><svg class="size-[31px]"><use href="#i-signs"/></svg></div>
      <h3 class="mt-[5px] w-[156px] text-xs/[15px] font-medium">Check Type File</h3>
      <p class="mt-[3px] text-[10px]/[12px] whitespace-nowrap text-[#909298]">mode: Rules</p>
    </article>
    <article class="absolute left-[624px] top-[573px] flex w-[78px] flex-col items-center text-center">
      <div class="flex h-[78px] w-full items-center justify-center rounded-[6px] border-2 border-[#888b90] bg-white text-[31px]/[31px] font-semibold text-[#c5c9d8]">?</div>
      <h3 class="mt-[5px] w-[156px] text-xs/[15px] font-medium">PDFGenie</h3>
      <p class="mt-[3px] text-[10px]/[12px] whitespace-nowrap text-[#909298]">Convert Images To PDF</p>
    </article>
    <article class="absolute left-[811px] top-[573px] flex w-[78px] flex-col items-center text-center">
      <div class="flex h-[78px] w-full items-center justify-center rounded-[6px] border-2 border-[#888b90] bg-white"><svg class="size-[26px]"><use href="#i-mistral"/></svg></div>
      <h3 class="mt-[5px] w-[156px] text-xs/[15px] font-medium">Mistral OCR</h3>
      <p class="mt-[3px] text-[10px]/[12px] whitespace-nowrap text-[#909298]">basicOcr</p>
    </article>
    <article class="absolute left-[935px] top-[573px] flex w-[78px] flex-col items-center text-center">
      <div class="flex h-[78px] w-full items-center justify-center rounded-[6px] border-2 border-[#888b90] bg-white"><svg class="h-[27px] w-[30px]"><use href="#i-split"/></svg></div>
      <h3 class="mt-[5px] w-[156px] text-xs/[15px] font-medium">Split Page</h3>
    </article>
    <article class="absolute left-[1138px] top-[573px] flex h-[78px] w-[187px] items-center gap-[13px] rounded-[6px] border-2 border-[#888b90] bg-white pl-[13px]">
      <svg class="h-[25px] w-[31px] text-[#373737]"><use href="#i-diagram"/></svg>
      <h3 class="text-xs/[15px] font-medium">Information<br>Extractor</h3>
    </article>
    <article class="absolute left-[1496px] top-[573px] flex w-[78px] flex-col items-center text-center">
      <div class="flex h-[78px] w-full items-center justify-center rounded-[6px] border-2 border-[#888b90] bg-white"><svg class="h-[31px] w-[23px]"><use href="#i-sheets"/></svg></div>
      <h3 class="mt-[5px] w-[156px] text-xs/[15px] font-medium">Record Document To Sheet3</h3>
      <p class="mt-[4px] text-[10px]/[12px] whitespace-nowrap text-[#909298]">append: sheet</p>
    </article>
    <article class="absolute left-[1699px] top-[588px] flex w-[62px] flex-col items-center text-center">
      <div class="flex size-[62px] items-center justify-center rounded-full border-2 border-[#c5cbda] bg-[#edeff5] text-[#7c8086]"><svg class="size-[23px]"><use href="#i-openai"/></svg></div>
      <h3 class="mt-[6px] w-[156px] text-xs/[15px] font-medium">OpenAI Chat Model</h3>
    </article>

    <!-- Connection handles -->
    <svg class="pointer-events-none absolute inset-0 size-full" aria-hidden="true">
      <defs>
        <g id="in"><path d="M-13-7.500L-3 0-13 7.500z"/><rect x="-4.500" y="-8.500" width="8" height="17"/></g>
        <circle id="out" r="8"/>
        <g id="model"><path d="M0-9L9 0 0 9-9 0z"/><path d="M0 5l5 12h-10z"/></g>
        <g id="add"><rect x="0" y="-10" width="20" height="20" rx="3" fill="#fcfdff" stroke="#7e8186" stroke-width="2"/><path d="M5 0h10M10-5v10" stroke="#7e8186" stroke-width="2"/></g>
      </defs>
      <g transform="translate(219.500 121.400) scale(.7786)" fill="#7e8186">
        <use href="#in" x="0" y="50"/><use href="#in" x="240" y="50"/><use href="#in" x="520" y="50"/><use href="#in" x="760" y="50"/><use href="#in" x="1160" y="50"/><use href="#in" x="1400" y="50"/><use href="#in" x="1640" y="50"/>
        <use href="#in" x="0" y="310"/><use href="#in" x="240" y="310"/><use href="#in" x="520" y="310"/><use href="#in" x="840" y="310"/><use href="#in" x="1160" y="310"/><use href="#in" x="1640" y="310"/>
        <use href="#in" x="0" y="630"/><use href="#in" x="240" y="630"/><use href="#in" x="520" y="630"/><use href="#in" x="760" y="630"/><use href="#in" x="920" y="630"/><use href="#in" x="1180" y="630"/><use href="#in" x="1640" y="630"/>
        <use href="#out" x="-120" y="50"/><use href="#out" x="100" y="50"/><use href="#out" x="340" y="33"/><use href="#out" x="340" y="67"/><use href="#out" x="620" y="50"/><use href="#out" x="1000" y="33"/><use href="#out" x="1000" y="67"/><use href="#out" x="1260" y="50"/><use href="#out" x="1500" y="50"/><use href="#out" x="1740" y="50"/>
        <use href="#out" x="100" y="310"/><use href="#out" x="340" y="310"/><use href="#out" x="620" y="310"/><use href="#out" x="940" y="310"/><use href="#out" x="1260" y="310"/><use href="#out" x="1740" y="310"/>
        <use href="#out" x="100" y="630"/><use href="#out" x="340" y="613"/><use href="#out" x="340" y="647"/><use href="#out" x="620" y="630"/><use href="#out" x="860" y="630"/><use href="#out" x="1020" y="630"/><use href="#out" x="1420" y="630"/><use href="#out" x="1740" y="630"/>
        <g fill="#7d7fb9"><use href="#model" x="800" y="100"/><use href="#model" x="1220" y="680"/><path d="M1940 591l9 9-9 9-9-9z"/></g>
        <use href="#add" x="996" y="310"/><use href="#add" x="1796" y="630"/>
        <path d="M1940 582v10" stroke="#7d7fb9" stroke-width="2"/>
      </g>
    </svg>

    <!-- Handle labels -->
    <div class="text-[9px]/[12px] text-[#6f7278]">
      <span class="absolute left-[492px] top-[141px] bg-white/60 px-px">true</span>
      <span class="absolute left-[492px] top-[167px] bg-white/60 px-px">false</span>
      <span class="absolute left-[1006px] top-[141px] bg-white/60 px-px">บัญชีและการเงิน</span>
      <span class="absolute left-[1006px] top-[167px] bg-white/60 px-px">อื่นๆ</span>
      <span class="absolute left-[492px] top-[593px] bg-white/60 px-px">PDF</span>
      <span class="absolute left-[492px] top-[619px] bg-white/60 px-px">IMG</span>
    </div>
    <div class="text-[9px]/[10px] text-[#7d7fb9]">
      <span class="absolute left-[842px] top-[208px] -translate-x-1/2 bg-white/75">Model<b class="text-[#ff3b30]">*</b></span>
      <span class="absolute left-[1169px] top-[660px] -translate-x-1/2 bg-white/75">Model<b class="text-[#ff3b30]">*</b></span>
      <span class="absolute left-[1730px] top-[566px] -translate-x-1/2 bg-white/75">Model</span>
    </div>

    <!-- Floating controls -->
    <button class="absolute top-4 right-4 flex size-[42px] items-center justify-center rounded border border-[#9fa4b4] bg-white" aria-label="Add node"><svg class="size-[14px]"><use href="#i-plus"/></svg></button>
    <div class="absolute bottom-4 left-4 flex gap-3">
      <button class="flex size-[42px] items-center justify-center rounded border border-[#9fa4b4] bg-white" aria-label="Fit view"><svg class="size-[14px]"><use href="#i-expand"/></svg></button>
      <button class="flex size-[42px] items-center justify-center rounded border border-[#9fa4b4] bg-white" aria-label="Zoom in"><svg class="size-4"><use href="#i-zoomin"/></svg></button>
      <button class="flex size-[42px] items-center justify-center rounded border border-[#9fa4b4] bg-white" aria-label="Zoom out"><svg class="size-4"><use href="#i-zoomout"/></svg></button>
      <button class="flex size-[42px] items-center justify-center rounded border border-[#9fa4b4] bg-white" aria-label="Reset zoom"><svg class="size-4"><use href="#i-undo"/></svg></button>
      <button class="flex size-[42px] items-center justify-center rounded border border-[#9fa4b4] bg-white" aria-label="Tidy up"><svg class="size-4"><use href="#i-broom"/></svg></button>
    </div>
    <button class="absolute bottom-4 left-1/2 flex h-[42px] -translate-x-1/2 items-center gap-[7px] rounded bg-[#ff6f5c] px-[21px] text-sm font-semibold whitespace-nowrap text-white"><svg class="h-4 w-[14px]"><use href="#i-flask"/></svg>Execute workflow</button>
  </main>

  <!-- Logs bar -->
  <footer class="flex h-[33px] shrink-0 items-center border-t border-[#dbdfe7] bg-white pr-[15px] pl-4">
    <h2 class="flex-1 text-xs">Logs</h2>
    <button aria-label="Pop out"><svg class="size-3"><use href="#i-popout"/></svg></button>
    <button class="ml-[14px]" aria-label="Open panel"><svg class="h-[8px] w-3" viewBox="0 0 12 8" fill="none" stroke="currentColor" stroke-width="2"><path d="M1 6.800L6 1.500l5 5.300"/></svg></button>
  </footer>
</div>
</body>
</html>
